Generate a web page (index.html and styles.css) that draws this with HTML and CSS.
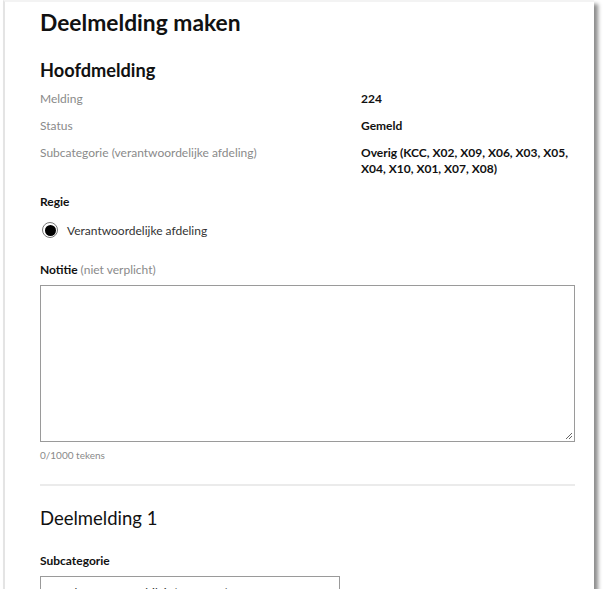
FILE: index.html
```html
<!DOCTYPE html>
<html lang="nl">
<head>
<meta charset="utf-8">
<title>Deelmelding maken</title>
<link rel="stylesheet" href="styles.css">
</head>
<body>
<div class="frame">
  <div class="content">
    <h1 class="title">Deelmelding maken</h1>
    <h2 class="section">Hoofdmelding</h2>
    <dl class="details">
      <dt>Melding</dt><dd>224</dd>
      <dt>Status</dt><dd>Gemeld</dd>
      <dt>Subcategorie (verantwoordelijke afdeling)</dt><dd>Overig (KCC, X02, X09, X06, X03, X05, X04, X10, X01, X07, X08)</dd>
    </dl>
    <div class="label regie">Regie</div>
    <label class="radio-row"><span class="radio"><span class="dot"></span></span><span>Verantwoordelijke afdeling</span></label>
    <div class="label notitie">Notitie <span class="optional">(niet verplicht)</span></div>
    <div class="textarea"><svg class="grip" width="8" height="8" viewBox="0 0 8 8"><path d="M7 1L1 7M7 4L4 7" stroke="#666" stroke-width="1"/></svg></div>
    <div class="counter">0/1000 tekens</div>
    <hr class="divider">
    <h2 class="section light">Deelmelding 1</h2>
    <div class="label subcat">Subcategorie</div>
    <div class="select"><span>Asfalt en wegmeubilair (E02, X05)</span></div>
  </div>
</div>
</body>
</html>
```
FILE: styles.css
```css
html, body { margin: 0; padding: 0; background: #fff; }
body { font-family: "Lato", "Noto Sans", sans-serif; color: #111; }
.frame {
  margin-left: 3px;
  width: 591px;
  height: 589px;
  box-sizing: border-box;
  border-left: 2px solid #e4e4e4;
  border-top: 2px solid #f3f3f3;
  background: #fff;
  overflow: hidden;
  box-shadow: 4px 4px 4px rgba(0,0,0,0.45);
}
.content { padding: 6px 19px 0 35px; }
.title { margin: 0; font-size: 22.8px; line-height: 28px; font-weight: 700; color: #111; }
.section { margin: 22px 0 0; font-size: 18.2px; line-height: 24px; font-weight: 700; color: #111; }
.section.light { font-weight: 400; margin-top: 20px; font-size: 18.5px; }
.details {
  display: grid;
  grid-template-columns: 321px 1fr;
  row-gap: 11px;
  margin: 9px 0 0;
  font-size: 12px;
  line-height: 16px;
}
.details dt { color: #8a8a8a; }
.details dd { margin: 0; font-weight: 700; color: #111; }
.label { font-size: 12px; line-height: 16px; font-weight: 700; color: #111; }
.regie { margin-top: 17px; }
.radio-row { display: flex; align-items: center; gap: 9px; height: 20px; margin-top: 10px; font-size: 12px; color: #333; padding-left: 2px; }
.radio { width: 16px; height: 16px; box-sizing: border-box; border: 1px solid #777; border-radius: 50%; display: flex; align-items: center; justify-content: center; }
.dot { width: 11px; height: 11px; border-radius: 50%; background: #000; }
.notitie { margin-top: 22px; }
.optional { font-weight: 400; color: #8a8a8a; }
.textarea {
  margin-top: 7px;
  height: 157px;
  box-sizing: border-box;
  border: 1px solid #9a9a9a;
  position: relative;
}
.grip { position: absolute; right: 1px; bottom: 1px; }
.counter { margin-top: 6px; font-size: 10px; line-height: 14px; color: #8a8a8a; }
.divider { margin: 22px 0 0; border: 0; height: 2px; background: #ebebeb; }
.subcat { margin-top: 23px; }
.select {
  margin-top: 7px;
  width: 300px;
  height: 36px;
  box-sizing: border-box;
  border: 1px solid #9a9a9a;
  padding: 8px 10px;
  font-size: 12px;
  line-height: 16px;
  color: #333;
}
```
